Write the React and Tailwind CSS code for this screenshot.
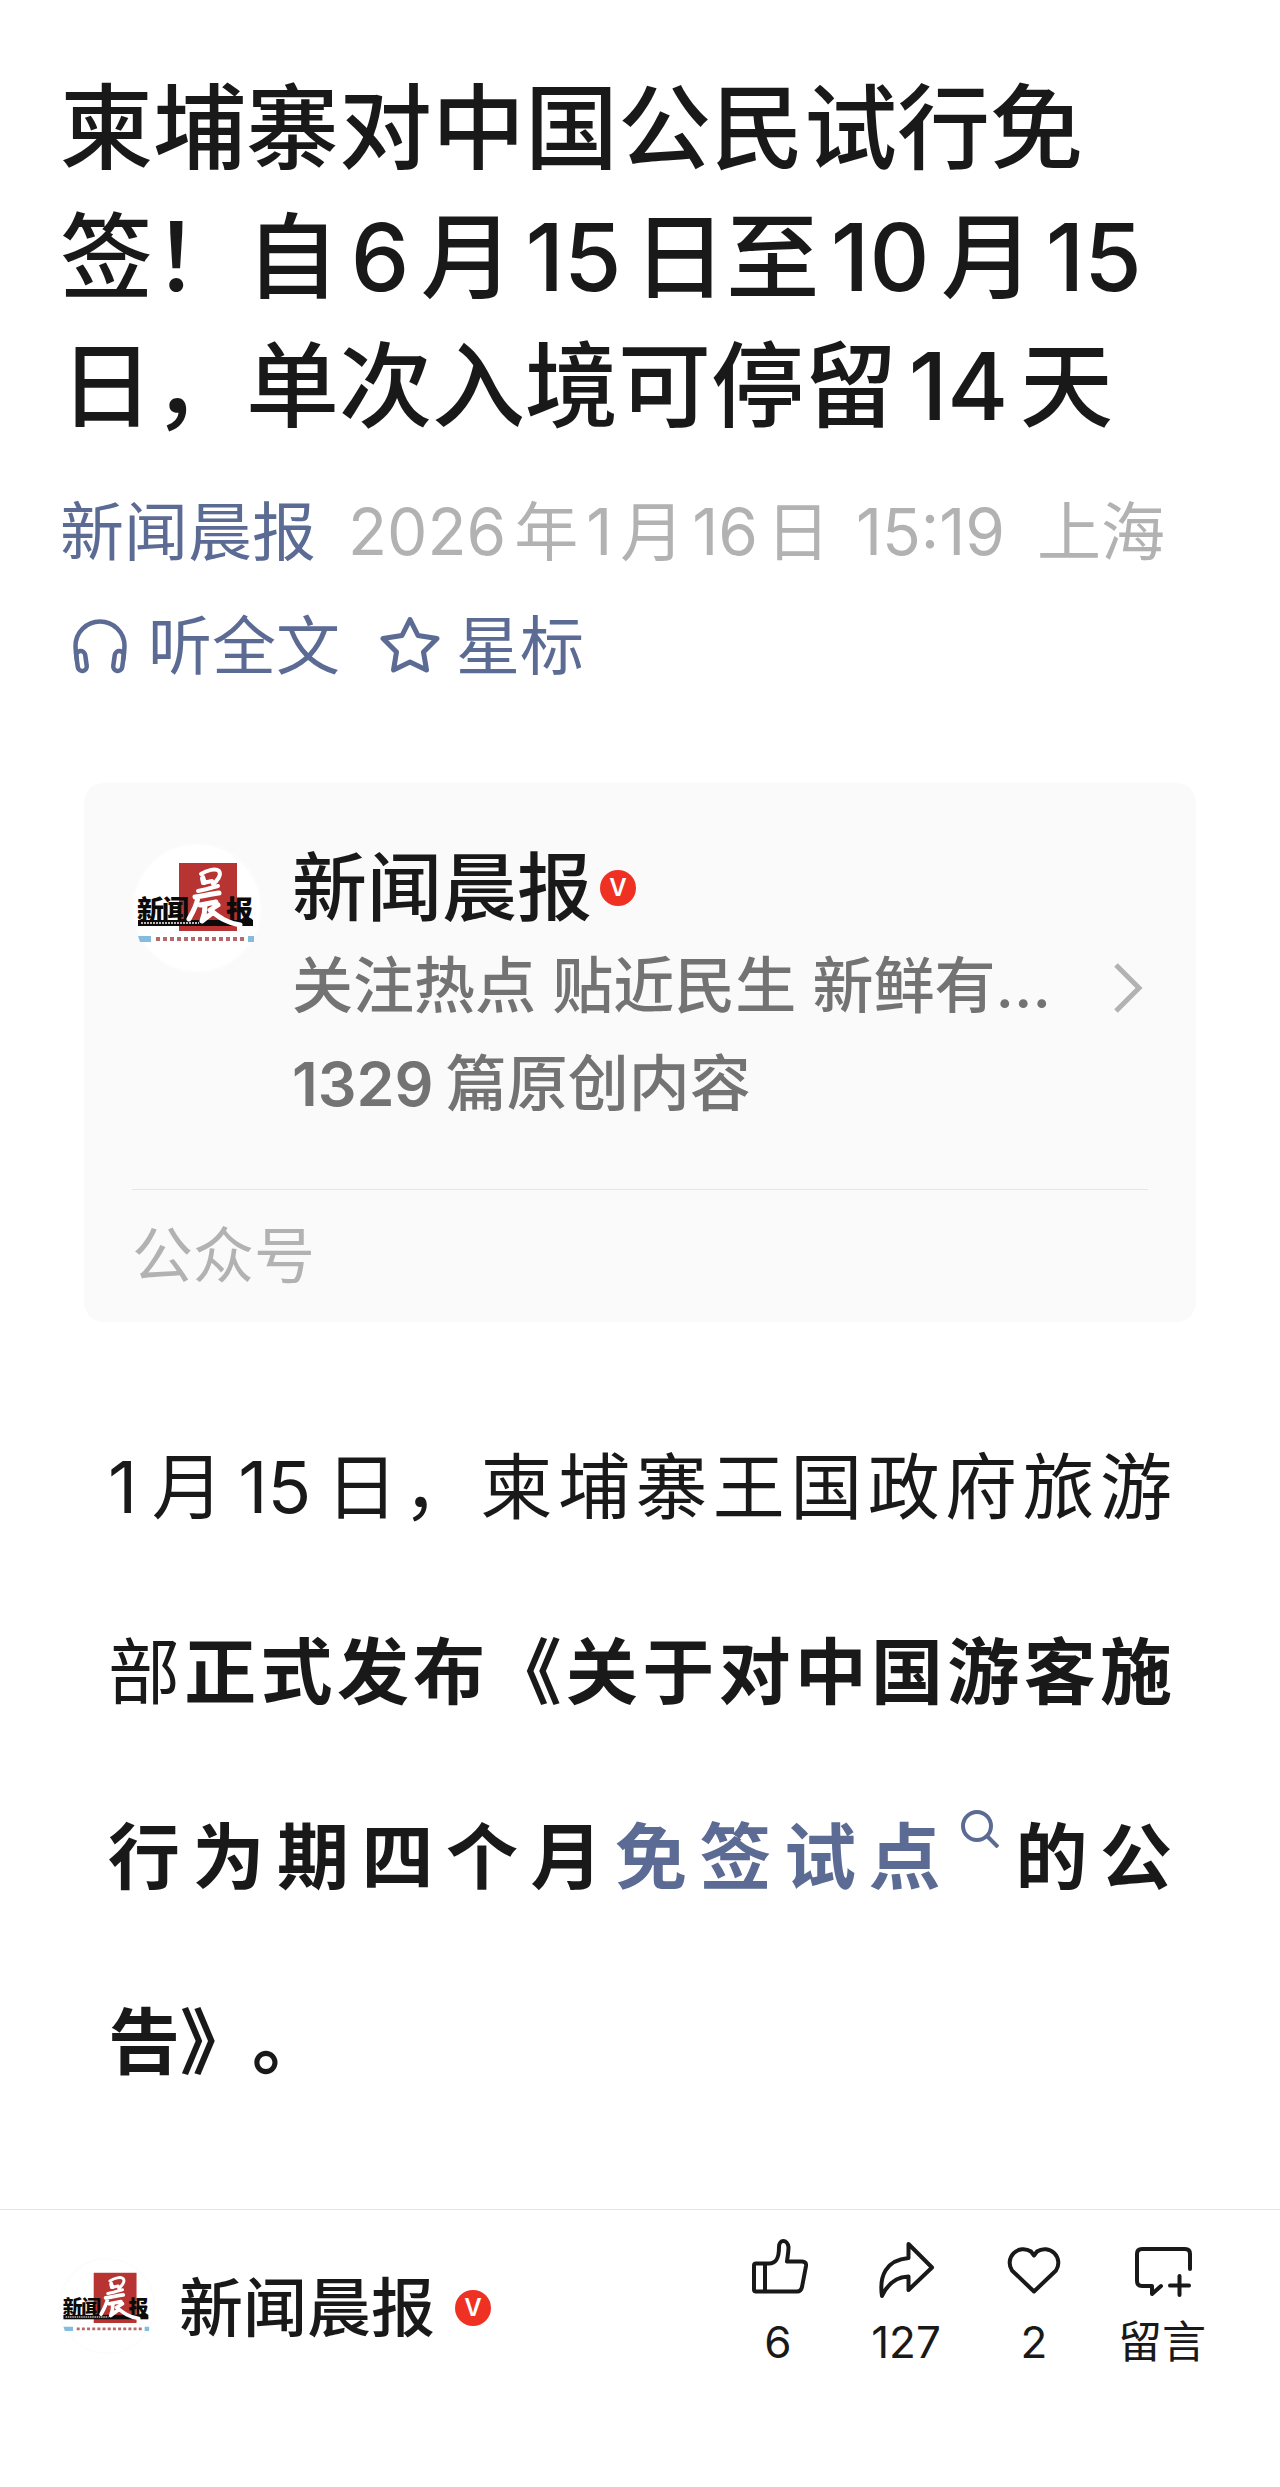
import React from 'react';

// Thin space between digits and Han characters
function Num({ children }) {
  return <span className="mx-[0.125em]">{children}</span>;
}

function Logo({ className }) {
  return (
    <svg viewBox="0 0 130 130" className={className} role="img" aria-label="新闻晨报">
      <circle cx="65" cy="65" r="64" fill="#fff" stroke="#fcfcfc" strokeWidth="2" />
      <rect x="47" y="20" width="58" height="68" fill="#b73432" />
      <rect x="6" y="77" width="115" height="6" fill="#0d0a0a" />
      <g className="font-['Noto_Sans_CJK_SC',sans-serif] font-black" fill="#0d0a0a">
        <text x="5" y="77" fontSize="27">新</text>
        <text x="30" y="77" fontSize="27">闻</text>
        <text x="94" y="77" fontSize="27">报</text>
      </g>
      <g fill="none" stroke="#fff" strokeLinecap="round" strokeLinejoin="round">
        <path d="M69 31c6-4 15-6 18-3 3 4-2 10-6 13M71 34l2 6M70 35l1 5 9-2M66 48c6-1 13-3 20-5" strokeWidth="4" />
        <path d="M63 54c8-1 16-3 24-4M66 54c-1 8-5 15-9 22M68 62l16-3M73 63c0 6-1 10-3 15l9-7M86 62l-8 5c8 6 14 12 30 15" strokeWidth="5" />
      </g>
      <path d="M6 93h13v6H8zM116 93h6v6h-6z" fill="#83bce0" />
      <path d="M24 96h89" stroke="#b5696b" strokeWidth="4" strokeDasharray="4 3" />
      <path d="M9 80h58" stroke="#bbb" strokeWidth="2" strokeDasharray="2 1" />
    </svg>
  );
}

function Badge() {
  return (
    <span className="flex size-9 shrink-0 items-center justify-center rounded-full bg-[#ef3124] text-2xl font-semibold text-white">
      V
    </span>
  );
}

function HeadphonesIcon() {
  return (
    <svg viewBox="0 0 56 56" className="size-14" fill="none" stroke="currentColor" strokeWidth="4.5">
      <path d="M5 42C4 37 3.5 33 3.5 28a24.5 24.5 0 0 1 49 0c0 5-.5 9-1.5 14" />
      <rect x="5" y="33" width="9" height="20" rx="4.5" transform="rotate(-8 9.5 43)" />
      <rect x="42" y="33" width="9" height="20" rx="4.5" transform="rotate(8 46.5 43)" />
    </svg>
  );
}

function StarIcon() {
  return (
    <svg viewBox="0 0 60 60" className="size-15" fill="none" stroke="currentColor" strokeWidth="5" strokeLinejoin="round">
      <path d="M30 3.5L38 19.5 57 22.5 43.5 36 46.5 54 30 46 13.5 54 16.5 36 3 22.5 22 19.5z" />
    </svg>
  );
}

function SearchIcon() {
  return (
    <svg viewBox="0 0 38 38" className="mr-1 ml-2 inline-block size-[38px] align-[35px]" fill="none" stroke="currentColor" strokeWidth="4">
      <circle cx="16" cy="16" r="14" />
      <path d="M26 26l11 11" />
    </svg>
  );
}

const actions = [
  {
    label: '6',
    name: '点赞',
    icon: (
      <>
        <path d="M8 25.5h13C29 25.5 31 19 31 9c0-8 8.5-8 9.5 0 0 5-1 10-1.5 14.5h15q4.5 0 4 4.5l-4 21q-1 4.5-5 4.5H8q-2 0-2-2v-24q0-2 2-2z" />
        <path d="M17 26v27" />
      </>
    ),
  },
  {
    label: '127',
    name: '分享',
    icon: <path d="M32.5 6L56 29.5 32.5 52V38.5C20 39 11 47 6 58 3 38 10 22 32.5 20z" />,
  },
  {
    label: '2',
    name: '喜欢',
    icon: <path d="M30 53.5L8 32.5A13.7 13.7 0 0 1 27 13.5l3 4 3-4A13.7 13.7 0 0 1 52 32.5z" />,
  },
  {
    label: '留言',
    name: '写留言',
    icon: <path d="M58 31V16q0-5-5-5H10q-5 0-5 5v27q0 5 5 5h10v8l9-8M38 47.5h19M47.5 38v19" />,
  },
];

function App() {
  return (
    <div className="bg-white font-['Inter','Noto_Sans_CJK_SC',sans-serif] text-[#191919] [text-spacing-trim:space-all]">
      <header className="px-[60px] pt-16">
        <h1 className="text-[93px] leading-[129px] font-medium">
          柬埔寨对中国公民试行免签！自<Num>6</Num>月<Num>15</Num>日至<Num>10</Num>月<Num>15</Num>日，单次入境可停留<Num>14</Num>天
        </h1>
        <div className="mt-6 flex items-center gap-8 text-[64px] leading-[114px] whitespace-nowrap text-[#b2b2b2]">
          <a href="#account" className="text-[#5b6b94]">新闻晨报</a>
          <time dateTime="2026-01-16T15:19">
            2026<Num>年</Num>1<Num>月</Num>16<Num>日</Num> 15:19
          </time>
          <span>上海</span>
        </div>
        <div className="flex items-center gap-10 pl-3 text-[64px] leading-[114px] text-[#5b6b94]">
          <button type="button" className="flex items-center gap-5">
            <HeadphonesIcon />
            听全文
          </button>
          <button type="button" className="flex items-center gap-4">
            <StarIcon />
            星标
          </button>
        </div>
      </header>

      <main>
        {/* account card */}
        <section id="account" className="mx-[84px] mt-20 rounded-[20px] bg-[#fafafa] px-12 pt-[60px]">
          <a href="#profile" className="flex items-center border-b border-[#e6e6e6] pb-14">
            <Logo className="size-[130px] shrink-0 self-start" />
            <div className="ml-[30px] min-w-0 grow text-[61px] leading-[98px] font-medium whitespace-nowrap text-[#737373]">
              <div className="mb-1 flex items-center gap-2 text-[75px] leading-[90px] text-[#191919]">
                新闻晨报
                <Badge />
              </div>
              <p>关注热点 贴近民生 新鲜有...</p>
              <p>
                <span className="mr-3 font-semibold">1329</span>篇原创内容
              </p>
            </div>
            <svg viewBox="0 0 30 50" className="mr-1 h-[50px] w-[30px] shrink-0" fill="none" stroke="#b2b2b2" strokeWidth="5">
              <path d="M2 2l23 23L2 48" />
            </svg>
          </a>
          <p className="text-[61px] leading-[132px] text-[#b2b2b2]">公众号</p>
        </section>

        <p className="mx-[108px] mt-[72px] text-justify text-[72px] leading-[185px]">
          1<Num>月</Num>15<span className="ml-[0.125em]">日，</span>柬埔寨王国政府旅游部
          <strong className="font-bold">
            正式发布《关于对中国游客施行为期四个月
            <a href="#search" className="text-[#5b6b94]">免签试点<SearchIcon /></a>
            的公<span className="whitespace-nowrap">告》。</span>
          </strong>
        </p>
      </main>

      <footer className="mt-[75px] flex items-start justify-between border-t border-[#e3e5e4] pr-[54px] pb-28 pl-[59px]">
        <a href="#account" className="mt-12 flex items-center text-[64px] leading-[100px] font-medium">
          <Logo className="mr-6 size-24 self-start" />
          <span className="mr-5">新闻晨报</span>
          <Badge />
        </a>
        <div className="mt-7 flex">
          {actions.map((action) => (
            <button key={action.label} type="button" aria-label={action.name} className="flex w-32 flex-col items-center gap-2 text-[44px] leading-[64px]">
              <svg viewBox="0 0 60 64" className="h-16 w-[60px]" fill="none" stroke="currentColor" strokeWidth="4" strokeLinejoin="round" strokeLinecap="round">
                {action.icon}
              </svg>
              {action.label}
            </button>
          ))}
        </div>
      </footer>
    </div>
  );
}

export default App;
